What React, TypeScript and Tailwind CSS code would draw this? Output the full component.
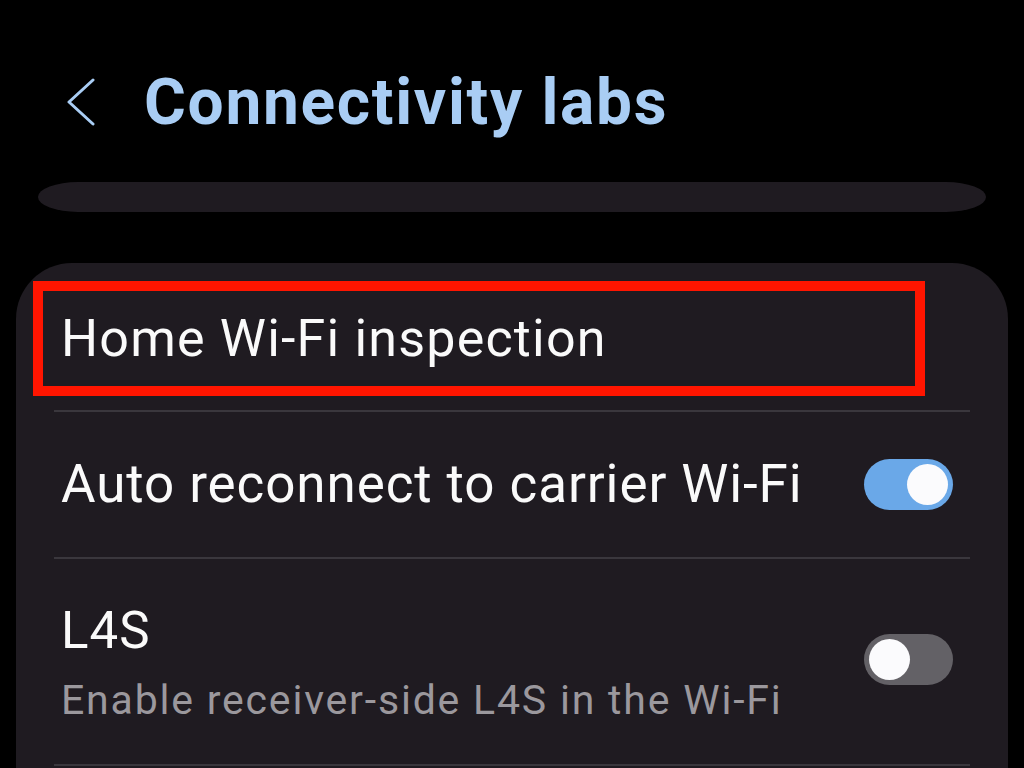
function Toggle({ on }: { on: boolean }) {
  return (
    <div
      className={
        on
          ? "flex h-[51px] w-[89px] items-center justify-end rounded-full bg-[#6aa8e8] px-[5px]"
          : "flex h-[51px] w-[89px] items-center justify-start rounded-full bg-[#636166] px-[5px]"
      }
    >
      <div className="h-[41px] w-[41px] rounded-full bg-[#fbfbfd]" />
    </div>
  );
}

function Divider() {
  return <div className="h-[2px] bg-[#3a373d]" />;
}

export default function App() {
  return (
    <div
      className="h-[768px] w-[1024px] overflow-hidden bg-black text-[#fafafa]"
      style={{ fontFamily: "Roboto, 'Noto Sans', sans-serif" }}
    >
      <header className="flex h-[182px] items-start pl-[66px] pt-[64px]">
        <svg width="30" height="48" viewBox="0 0 30 48" className="mt-[14px]">
          <path d="M27 2 L3 24 L27 46" fill="none" stroke="#a9cdf4" strokeWidth="3" strokeLinecap="round" strokeLinejoin="round" />
        </svg>
        <h1 className="ml-[48px] text-[64px] font-bold leading-[78px] tracking-[1.7px] text-[#a9cdf4]">
          Connectivity labs
        </h1>
      </header>

      <div className="mx-[38px] h-[30px] rounded-[40px/15px] bg-[#1f1b21]" />

      <main className="mx-[16px] mt-[51px] h-[600px] rounded-t-[56px] bg-[#1f1b21] px-[38px]">
        <div className="pb-[14px] pt-[18px]">
          <div className="-ml-[21px] flex h-[115px] w-[892px] items-center border-[10px] border-[#ff1500] pl-[18px]">
            <span className="text-[52px] leading-none tracking-[1.2px]">Home Wi-Fi inspection</span>
          </div>
        </div>
        <Divider />
        <div className="flex h-[145px] items-center justify-between pl-[7px] pr-[17px]">
          <span className="text-[53px] leading-none tracking-[0.9px]">Auto reconnect to carrier Wi-Fi</span>
          <Toggle on />
        </div>
        <Divider />
        <div className="flex h-[205px] items-center justify-between pl-[7px] pr-[17px]">
          <div className="flex flex-col self-start pt-[44px]">
            <span className="text-[51px] leading-[56px] tracking-[1px]">L4S</span>
            <span className="mt-[17px] text-[41px] leading-[48px] tracking-[1.8px] text-[#9b989d]">
              Enable receiver-side L4S in the Wi-Fi
            </span>
          </div>
          <div className="-mt-[4px]">
            <Toggle on={false} />
          </div>
        </div>
        <Divider />
      </main>
    </div>
  );
}
